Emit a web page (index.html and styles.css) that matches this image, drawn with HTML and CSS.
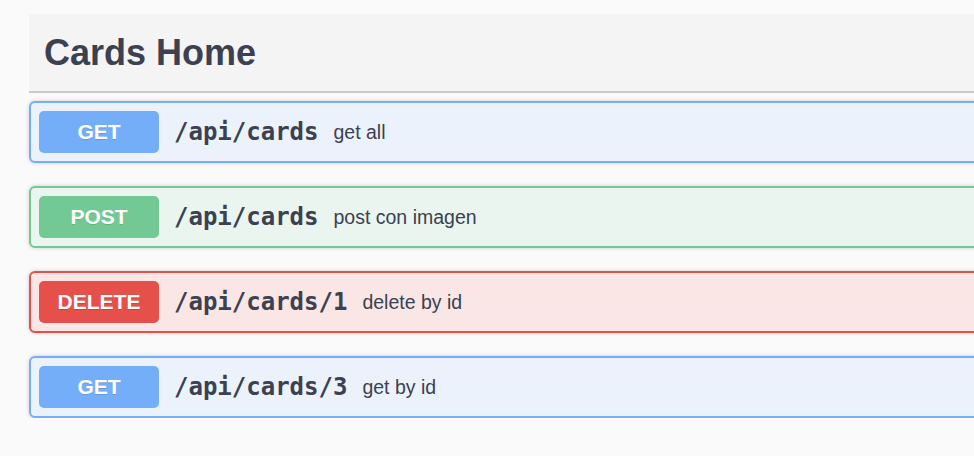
FILE: index.html
```html
<!DOCTYPE html>
<html lang="en">
<head>
<meta charset="utf-8">
<title>Cards Home</title>
<link rel="stylesheet" href="styles.css">
</head>
<body>
<div class="wrapper">
  <section class="tag-section">
    <h3 class="tag-header">Cards Home</h3>
    <div class="ops">
      <div class="opblock opblock-get">
        <span class="method">GET</span>
        <span class="path">/api/cards</span>
        <span class="desc">get all</span>
      </div>
      <div class="opblock opblock-post">
        <span class="method">POST</span>
        <span class="path">/api/cards</span>
        <span class="desc">post con imagen</span>
      </div>
      <div class="opblock opblock-delete">
        <span class="method">DELETE</span>
        <span class="path">/api/cards/1</span>
        <span class="desc">delete by id</span>
      </div>
      <div class="opblock opblock-get">
        <span class="method">GET</span>
        <span class="path">/api/cards/3</span>
        <span class="desc">get by id</span>
      </div>
    </div>
  </section>
</div>
</body>
</html>
```

FILE: styles.css
```css
html, body {
  margin: 0;
  padding: 0;
  background: #fafafa;
  overflow: hidden;
}

body {
  font-family: "Liberation Sans", Arial, sans-serif;
  color: #3b4151;
}

.wrapper {
  padding: 14px 0 0 29px;
  width: 1200px;
}

.tag-header {
  margin: 0 0 8px;
  height: 77px;
  box-sizing: border-box;
  padding: 0 30px 0 15px;
  display: flex;
  align-items: center;
  background: #f4f4f4;
  border-bottom: 2px solid #cacaca;
  font-size: 36px;
  font-weight: 700;
  color: #3b4151;
  height: 79px;
}

.ops {
  display: flex;
  flex-direction: column;
  gap: 23px;
}

.opblock {
  display: flex;
  align-items: center;
  height: 62px;
  box-sizing: border-box;
  padding: 0 8px;
  border: 2px solid;
  border-radius: 6px;
  box-shadow: 0 0 4px rgba(0, 0, 0, 0.18);
}

.method {
  width: 120px;
  height: 42px;
  flex: none;
  display: flex;
  align-items: center;
  justify-content: center;
  border-radius: 5px;
  color: #fff;
  font-size: 21px;
  font-weight: 700;
  text-shadow: 0 1px 0 rgba(0, 0, 0, 0.12);
}

.path {
  padding: 0 15px;
  font-family: "DejaVu Sans Mono", "Liberation Mono", monospace;
  font-weight: 700;
  font-size: 24px;
  color: #3b4151;
}

.desc {
  font-size: 19.5px;
  color: #3b4151;
}

.opblock-get {
  background: #ebf2fb;
  border-color: #74aef9;
}
.opblock-get .method { background: #74aef9; }

.opblock-post {
  background: #ebf5ef;
  border-color: #72c993;
}
.opblock-post .method { background: #72c993; }

.opblock-delete {
  background: #f9e6e5;
  border-color: #e6504a;
}
.opblock-delete .method { background: #e6504a; }
```
